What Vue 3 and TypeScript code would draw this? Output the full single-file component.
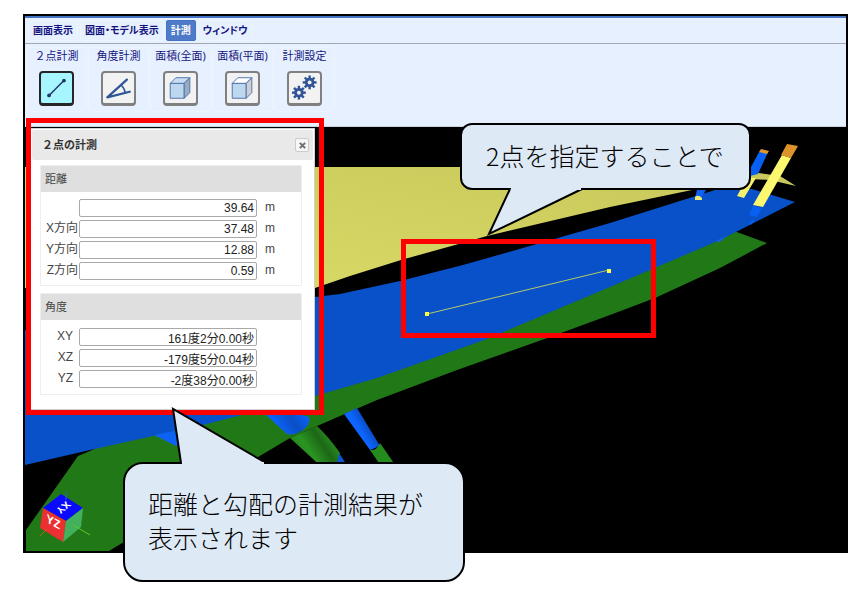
<script setup lang="ts">
import { ref } from 'vue'

interface Tool {
  id: string
  label: string
}
interface Field {
  id: string
  label: string
  value: string
  unit: string
}

const menus: string[] = ['画面表示', '図面・モデル表示', '計測', 'ウィンドウ']
const activeMenu = ref('計測')

const tools: Tool[] = [
  { id: 'distance', label: '２点計測' },
  { id: 'angle', label: '角度計測' },
  { id: 'area-all', label: '面積(全面)' },
  { id: 'area-flat', label: '面積(平面)' },
  { id: 'settings', label: '計測設定' },
]
const activeTool = ref('distance')

const distances: Field[] = [
  { id: 'd-total', label: '', value: '39.64', unit: 'm' },
  { id: 'd-x', label: 'X方向', value: '37.48', unit: 'm' },
  { id: 'd-y', label: 'Y方向', value: '12.88', unit: 'm' },
  { id: 'd-z', label: 'Z方向', value: '0.59', unit: 'm' },
]
const angles: Field[] = [
  { id: 'a-xy', label: 'XY', value: '161度2分0.00秒', unit: '' },
  { id: 'a-xz', label: 'XZ', value: '-179度5分0.04秒', unit: '' },
  { id: 'a-yz', label: 'YZ', value: '-2度38分0.00秒', unit: '' },
]
const teeth: number[] = [0, 45, 90, 135, 180, 225, 270, 315]
</script>

<template>
  <main class="page">
    <div class="app">
      <nav class="menu">
        <button
          v-for="m in menus"
          :key="m"
          type="button"
          class="menu-item"
          :class="{ active: m === activeMenu }"
          @click="activeMenu = m"
        >{{ m }}</button>
      </nav>

      <div class="toolbar">
        <div v-for="t in tools" :key="t.id" class="tool">
          <span :id="'label-' + t.id" class="tool-label">{{ t.label }}</span>
          <button
            type="button"
            class="tool-button"
            :class="{ active: t.id === activeTool }"
            :aria-labelledby="'label-' + t.id"
            @click="activeTool = t.id"
          >
            <svg viewBox="0 0 30 30" class="tool-icon" aria-hidden="true">
              <g v-if="t.id === 'distance'" fill="#1f3763" stroke="#1f3763">
                <path d="M7 23 23 7" stroke-width="1.6" />
                <circle cx="7" cy="23" r="2" stroke="none" />
                <circle cx="23" cy="7" r="2" stroke="none" />
              </g>
              <g v-else-if="t.id === 'angle'" fill="none" stroke="#2f5597" stroke-linecap="round">
                <path d="M24 6 3 25 27 19" stroke-width="2.4" stroke-linejoin="round" />
                <path d="M18 12Q22 16 22 20" stroke-width="1.6" />
              </g>
              <g v-else-if="t.id === 'area-all'" stroke="#4a70ad" stroke-width="1" stroke-linejoin="round">
                <path d="M4 10H19V26H4Z" fill="#bdd7ee" />
                <path d="M4 10 10 4H25L19 10Z" fill="#c9def1" />
                <path d="M19 10 25 4V20L19 26Z" fill="#98adc0" />
              </g>
              <g v-else-if="t.id === 'area-flat'" stroke="#4a70ad" stroke-width="1" stroke-linejoin="round">
                <path d="M4 10H19V26H4Z" fill="#bdd7ee" />
                <path d="M4 10 10 4H25L19 10Z" fill="#ffffff" />
                <path d="M19 10 25 4V20L19 26Z" fill="#d0cece" />
              </g>
              <g v-else fill="none" stroke="#2f5597">
                <g transform="translate(9 20)">
                  <circle r="3.6" stroke-width="3" />
                  <path v-for="a in teeth" :key="a" d="M0-4V-7.4" stroke-width="2.6" :transform="'rotate(' + a + ')'" />
                </g>
                <g transform="translate(20.500 9)">
                  <circle r="3.6" stroke-width="3" />
                  <path v-for="a in teeth" :key="a" d="M0-4V-7.4" stroke-width="2.6" :transform="'rotate(' + a + ')'" />
                </g>
              </g>
            </svg>
          </button>
        </div>
      </div>

      <section class="viewer">
        <svg class="scene" viewBox="25 127 821 424" role="img" aria-label="3Dモデル">
          <defs>
            <linearGradient id="sand" x1="0" y1="1" x2="1" y2="0">
              <stop offset="0" stop-color="#dcdc68" />
              <stop offset="1" stop-color="#c9c95c" />
            </linearGradient>
            <linearGradient id="bluePile" gradientUnits="userSpaceOnUse" x1="352" y1="440" x2="372" y2="428">
              <stop offset="0" stop-color="#0a62ff" />
              <stop offset=".5" stop-color="#0d66ff" />
              <stop offset="1" stop-color="#0848b8" />
            </linearGradient>
            <linearGradient id="greenPile" gradientUnits="userSpaceOnUse" x1="300" y1="456" x2="330" y2="436">
              <stop offset="0" stop-color="#24861c" />
              <stop offset=".3" stop-color="#2a9422" />
              <stop offset=".7" stop-color="#1d6716" />
              <stop offset="1" stop-color="#268c1e" />
            </linearGradient>
            <linearGradient id="shaft" gradientUnits="userSpaceOnUse" x1="280" y1="432" x2="308" y2="414">
              <stop offset="0" stop-color="#0a62ff" />
              <stop offset=".5" stop-color="#0a4fc4" />
              <stop offset="1" stop-color="#0a62ff" />
            </linearGradient>
          </defs>
          <rect x="25" y="127" width="821" height="424" fill="#000" />
          <path d="M25 167H470L700 180 692 190 610 207 487 236 455 245 401 260 350 276 315 288H25Z" fill="url(#sand)" />
          <path d="M767 243 720 268 655 298 610 315 550 337 457 370 377 400 317 426 290 438 258 457 160 520 109 551H26V530L78 456 90 451 340 330 640 250 734 231Z" fill="#217817" />
          <path d="M265 414H298L309 417Q311 424 303 430 294 436 287 434Z" fill="url(#shaft)" />
          <path d="M290 438 317 426Q328 436 340 453L337 470H325Z" fill="url(#greenPile)" />
          <path d="M337 464 339 453 358 482H346Z" fill="#0a55d8" />
          <path d="M344 414 357 408 380 446 370 450Z" fill="url(#bluePile)" />
          <path d="M370 450Q377 451 380 443L400 472H385Z" fill="#248c1c" />
          <path d="M25 465 90 450 153 436 203 425 315 396 377 378 487 339 610 287 720 240 795 202 752 189 715 190 610 223 537 244 463 265 400 281 340 294 315 297 25 330Z" fill="#0951c8" />
          <path d="M154 435 174 431 190 446H176Z" fill="#0d62f4" />
          <path d="M716 241 726 236 720 242Z" fill="#0d62f4" />

          <path d="M697 190H706L701 198H695Z" fill="#0d62f4" />
          <path d="M695 197Q698 194 702 198V200H695Z" fill="#eee96d" />
          <path d="M751 172 780 176 796 186 770 180 751 179Z" fill="#cac95d" />
          <path d="M759 152 768 152 758 174 750 176V169Z" fill="#0860f2" />
          <path d="M761 149 769 151 767 154 759 152Z" fill="#df962b" />
          <path d="M747 178H756L744 198 737 196Z" fill="#f6f26b" />
          <path d="M782 155 791 158 763 207 753 205Z" fill="#fbf76f" />
          <path d="M787 144 798 146 791 158 781 155Z" fill="#dc942a" />
          <path d="M753 206 762 208 757 217 749 215Z" fill="#0860f2" />
          <path d="M749 222 755 219 751 225Z" fill="#0860f2" />

          <path d="M427 314 609 270" stroke="#b6c968" stroke-width="1" />
          <path d="M425 312h4v4h-4ZM607 269h4v4h-4Z" fill="#ffff45" />

          <g class="axis-cube">
            <path d="M61 494 83 508 66 521 43 508Z" fill="#0a0aff" />
            <path d="M43 508 66 521 63 542 40 528Z" fill="#ea3030" />
            <path d="M66 521 83 508 81 527 63 542Z" fill="#42b05c" />
            <path d="M66 492V500" stroke="#2b62cf" />
            <path d="M73 525 90 535" stroke="#5ccc24" />
            <path d="M47 529 40 536" stroke="#b3641c" />
            <text class="cube-text" transform="matrix(-.7 .55 -.7 -.5 66 501)">XY</text>
            <text class="cube-text" transform="matrix(.9 .5 -.1 1 46 522)">YZ</text>
          </g>
        </svg>

        <section class="dialog" aria-labelledby="dialog-title">
          <header class="dialog-head">
            <h1 id="dialog-title">２点の計測</h1>
            <button type="button" class="close" aria-label="閉じる">
              <svg viewBox="0 0 8 8" aria-hidden="true"><path d="M1 1 7 7M7 1 1 7" stroke="#707070" stroke-width="2.400" /></svg>
            </button>
          </header>
          <section class="group">
            <h2>距離</h2>
            <div class="fields">
              <div v-for="f in distances" :key="f.id" class="field">
                <label :for="f.id">{{ f.label }}</label>
                <input :id="f.id" type="text" :value="f.value" :aria-label="f.label || '距離'" readonly />
                <span class="unit">{{ f.unit }}</span>
              </div>
            </div>
          </section>
          <section class="group angles">
            <h2>角度</h2>
            <div class="fields">
              <div v-for="f in angles" :key="f.id" class="field">
                <label :for="f.id">{{ f.label }}</label>
                <input :id="f.id" type="text" :value="f.value" readonly />
              </div>
            </div>
          </section>
        </section>
        <div class="mark mark-dialog"></div>
        <div class="mark mark-line"></div>

        <aside class="callout callout-top">
          <p>2点を指定することで</p>
          <svg class="tail tail-top" viewBox="0 0 100 52" aria-hidden="true">
            <path d="M23 2 2 47 95 2" fill="#dee9f6" stroke="#000" stroke-width="2" />
            <path d="M24 1H94" stroke="#dee9f6" stroke-width="4" />
          </svg>
        </aside>
        <aside class="callout callout-bottom">
          <p>距離と勾配の計測結果が<br />表示されます</p>
          <svg class="tail tail-bottom" viewBox="0 0 100 60" aria-hidden="true">
            <path d="M10 57 2 3 95 57" fill="#dee9f6" stroke="#000" stroke-width="2" />
            <path d="M11 58H93" stroke="#dee9f6" stroke-width="4" />
          </svg>
        </aside>
      </section>
    </div>
  </main>
</template>

<style>
body {
  background: #fff;
}
</style>

<style scoped>
* {
  box-sizing: border-box;
}
.page {
  padding: 14px 9px 47px 23px;
  font-family: "Noto Sans", "Noto Sans CJK JP", sans-serif;
}
.app {
  border: 2px solid #000;
  background: #e6f0ff;
}
.menu {
  display: flex;
  gap: 2px;
  height: 28px;
  padding: 2px 3px 3px;
  border-top: 2px solid #4472c4;
  border-bottom: 1px solid #a3a8b0;
}
.menu-item {
  height: 21px;
  padding: 0 4px 1px;
  border: 1px solid #ecf4ff;
  border-radius: 2px;
  background: transparent;
  color: #14147d;
  font: bold 10px/18px "Noto Sans CJK JP", sans-serif;
  font-feature-settings: "palt";
}
.menu-item.active {
  border-color: #4472c4;
  background: #4e7ac7;
  color: #fff;
}
.toolbar {
  display: flex;
  gap: 1px;
  height: 83px;
  padding: 3px 1px 14px;
  border-bottom: 1px solid #c9d3df;
}
.tool {
  display: flex;
  flex-direction: column;
  align-items: center;
  gap: 7px;
  width: 61px;
  border: 1px solid #ecf4ff;
  border-radius: 3px;
}
.tool-label {
  color: #14147d;
  font: 11px/16px "Noto Sans", "Noto Sans CJK JP", sans-serif;
  white-space: nowrap;
}
.tool-button {
  width: 35px;
  height: 35px;
  padding: 1px;
  border: 2px solid #808080;
  border-bottom-width: 3px;
  border-radius: 4px;
  background: #f2f2f2;
}
.tool-button.active {
  border-color: #262626;
  background: #a6f5ff;
}
.tool-icon {
  display: block;
  width: 29px;
  height: 28px;
}
.viewer {
  position: relative;
}
.scene {
  display: block;
  width: 100%;
}
.cube-text {
  fill: #fff;
  font: bold 12px "Liberation Sans", sans-serif;
}
.dialog {
  position: absolute;
  top: 1px;
  left: 5px;
  width: 285px;
  padding: 1px 1px 14px;
  border: 1px solid #d0d0d0;
  background: #fff;
  color: #444;
}
.dialog-head {
  display: flex;
  align-items: center;
  justify-content: space-between;
  height: 30px;
  padding: 0 4px 0 10px;
  border-radius: 2px;
  background: #e9e9e9;
}
.dialog-head h1 {
  margin: 0;
  padding-bottom: 2px;
  color: #333;
  font: bold 11px/20px "Noto Sans CJK JP", sans-serif;
}
.close {
  display: grid;
  place-items: center;
  width: 14px;
  height: 14px;
  padding: 0;
  border: 1px solid #ccc;
  border-radius: 2px;
  background: #f6f6f6;
}
.close svg {
  width: 7px;
  height: 7px;
}
.group {
  margin: 5px 11px 0 8px;
  border: 1px solid #eee;
}
.group h2 {
  height: 26px;
  margin: 0;
  padding: 0 4px;
  background: #dfdfdf;
  font: 11px/24px "Noto Sans CJK JP", sans-serif;
}
.fields {
  display: grid;
  gap: 3px;
  padding: 7px 0 5px;
}
.group.angles {
  margin-top: 7px;
}
.angles .fields {
  padding: 8px 0 6px;
}
.field {
  display: grid;
  grid-template-columns: 38px 178px 1fr;
  align-items: start;
}
.field label {
  padding-right: 1px;
  text-align: right;
  font: 12px/16px "Liberation Sans", "Noto Sans CJK JP", sans-serif;
  white-space: nowrap;
}
.angles .field label {
  padding-right: 6px;
}
.field input {
  width: 178px;
  height: 18px;
  padding: 0 2px;
  border: 1px solid #a9a9a9;
  border-radius: 2px;
  background: #fff;
  color: #222;
  font: 12px/16px "Liberation Sans", "Noto Sans CJK JP", sans-serif;
  text-align: right;
}
.unit {
  padding-left: 8px;
  font: 12px/16px "Liberation Sans", sans-serif;
}
.mark {
  position: absolute;
  border: 5px solid #f00;
}
.mark-dialog {
  top: -9px;
  left: 1px;
  width: 298px;
  height: 297px;
}
.mark-line {
  top: 112px;
  left: 376px;
  width: 255px;
  height: 99px;
}
.callout {
  position: absolute;
  border: 2px solid #000;
  background: #dee9f6;
  color: #000;
}
.callout p {
  margin: 0;
  font: 300 25px/34px "Noto Sans CJK JP", sans-serif;
  white-space: nowrap;
}
.callout-top {
  top: -4px;
  left: 435px;
  width: 291px;
  padding: 13px 24px 16px;
  border-radius: 12px;
}
.callout-bottom {
  top: 335px;
  left: 98px;
  width: 342px;
  padding: 22px 23px 26px;
  border-radius: 20px;
}
.tail {
  position: absolute;
  overflow: visible;
}
.tail-top {
  top: 62px;
  left: 25px;
  width: 100px;
  height: 52px;
}
.tail-bottom {
  top: -58px;
  left: 46px;
  width: 100px;
  height: 60px;
}
</style>
